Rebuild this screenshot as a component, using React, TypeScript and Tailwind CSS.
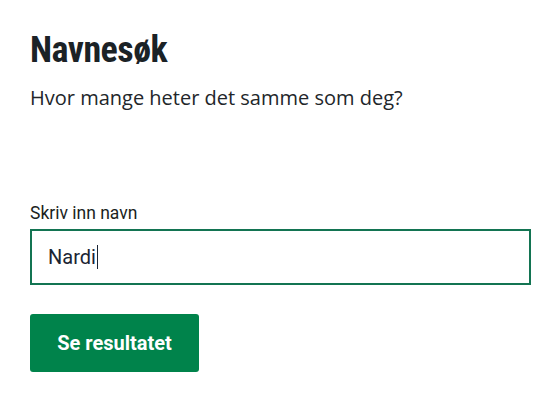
import React from "react";

export default function App() {
  return (
    <div className="w-[554px] h-[402px] bg-white pl-[30px] pr-[24px] pt-[28px]">
      <h1
        className="text-[36px] leading-[44px] font-bold text-[#1b2226] tracking-[-0.5px]"
        style={{ fontFamily: '"Roboto Condensed", "Liberation Sans Narrow", Roboto, sans-serif' }}
      >
        Navnesøk
      </h1>
      <p
        className="mt-[12px] text-[20px] leading-[28px] text-[#22262a]"
        style={{ fontFamily: '"Open Sans", sans-serif' }}
      >
        Hvor mange heter det samme som deg?
      </p>
      <div className="mt-[91px]" style={{ fontFamily: 'Roboto, sans-serif' }}>
        <label className="block text-[17.5px] leading-[20px] text-[#1b1f22]">Skriv inn navn</label>
        <div className="mt-[6px] h-[56px] w-[501px] border-2 border-[#137452] flex items-center pl-[16px]">
          <span className="text-[20px] text-[#1a2433]">Nardi</span>
          <span className="inline-block w-[1px] h-[24px] bg-[#1a2433] ml-[1px]"></span>
        </div>
        <button className="mt-[29px] h-[58px] w-[169px] rounded-[3px] bg-[#00834b] text-white text-[20px] font-bold">
          Se resultatet
        </button>
      </div>
    </div>
  );
}
